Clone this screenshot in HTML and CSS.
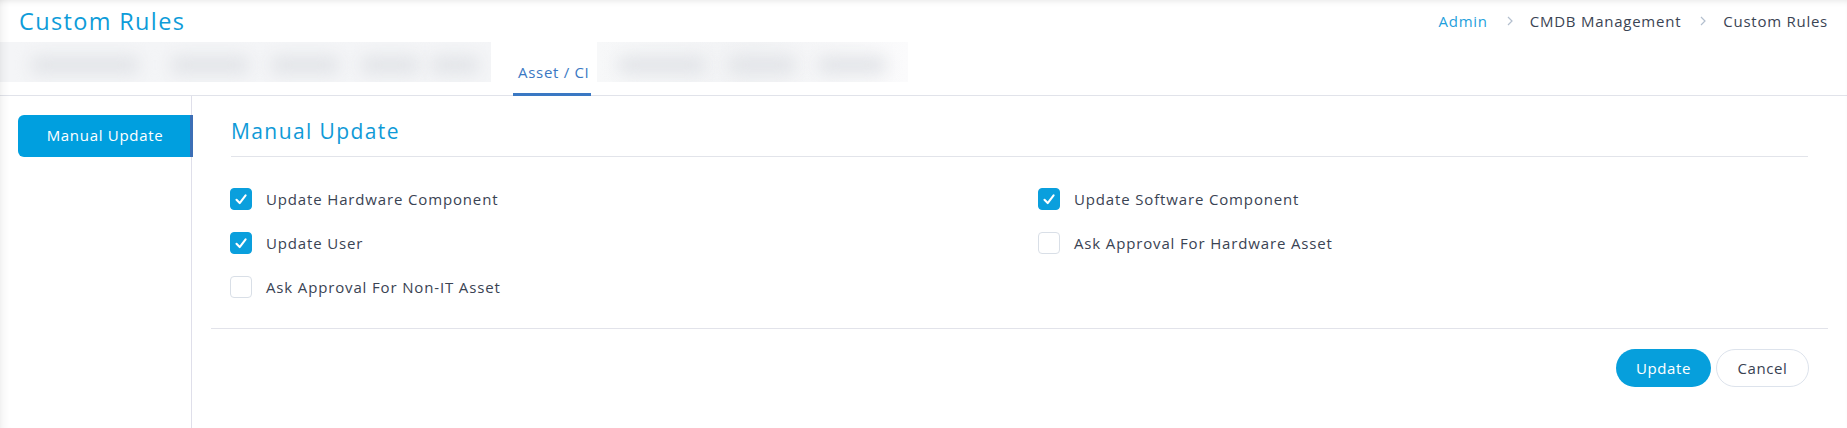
FILE: index.html
```html
<!DOCTYPE html>
<html lang="en">
<head>
<meta charset="utf-8">
<title>Custom Rules</title>
<link rel="stylesheet" href="styles.css">
</head>
<body>
<div class="page">
  <header class="topbar">
    <h1 class="page-title">Custom Rules</h1>
    <nav class="breadcrumb">
      <a class="crumb crumb-link">Admin</a>
      <svg class="crumb-sep" width="8" height="12" viewBox="0 0 8 12"><path d="M2 2l4 4-4 4" fill="none" stroke="#b3bfce" stroke-width="1.2"/></svg>
      <span class="crumb">CMDB Management</span>
      <svg class="crumb-sep" width="8" height="12" viewBox="0 0 8 12"><path d="M2 2l4 4-4 4" fill="none" stroke="#b3bfce" stroke-width="1.2"/></svg>
      <span class="crumb">Custom Rules</span>
    </nav>
  </header>

  <nav class="tabs">
    <div class="tab-blur tab-blur-left">
      <span class="blob b1"></span><span class="blob b2"></span><span class="blob b3"></span><span class="blob b4"></span><span class="blob b5"></span>
    </div>
    <a class="tab tab-active">Asset / CI</a>
    <div class="tab-blur tab-blur-right">
      <span class="blob b6"></span><span class="blob b7"></span><span class="blob b8"></span>
    </div>
  </nav>

  <div class="layout">
    <aside class="sidebar">
      <button class="side-item side-item-active">Manual Update</button>
    </aside>
    <main class="content">
      <section class="form-body">
        <h2 class="section-title">Manual Update</h2>
        <div class="options">
          <label class="option"><span class="check checked"><svg width="22" height="22" viewBox="0 0 22 22"><path d="M6.5 11.8l3.2 3.3L15.6 7.4" fill="none" stroke="#fff" stroke-width="2.1" stroke-linecap="round" stroke-linejoin="round"/></svg></span>Update Hardware Component</label>
          <label class="option"><span class="check checked"><svg width="22" height="22" viewBox="0 0 22 22"><path d="M6.5 11.8l3.2 3.3L15.6 7.4" fill="none" stroke="#fff" stroke-width="2.1" stroke-linecap="round" stroke-linejoin="round"/></svg></span>Update Software Component</label>
          <label class="option"><span class="check checked"><svg width="22" height="22" viewBox="0 0 22 22"><path d="M6.5 11.8l3.2 3.3L15.6 7.4" fill="none" stroke="#fff" stroke-width="2.1" stroke-linecap="round" stroke-linejoin="round"/></svg></span>Update User</label>
          <label class="option"><span class="check"></span>Ask Approval For Hardware Asset</label>
          <label class="option"><span class="check"></span>Ask Approval For Non-IT Asset</label>
        </div>
      </section>
      <footer class="form-footer">
        <button class="btn btn-primary">Update</button>
        <button class="btn btn-default">Cancel</button>
      </footer>
    </main>
  </div>
</div>
</body>
</html>
```

FILE: styles.css
```css
* { box-sizing: border-box; }
html, body { margin: 0; padding: 0; background: #fff; }
body {
  font-family: "Open Sans", "Noto Sans", sans-serif;
  color: #364152;
  width: 1847px;
  height: 428px;
  overflow: hidden;
}
.page {
  position: relative;
  height: 428px;
  background: #fff;
}
.page::after {
  content: "";
  position: absolute;
  inset: 0;
  pointer-events: none;
  box-shadow: inset 0 5px 6px -4px rgba(0,0,0,0.10), inset 10px 0 10px -8px rgba(0,0,0,0.07);
}

/* top bar */
.topbar {
  height: 42px;
  display: flex;
  align-items: center;
  justify-content: space-between;
  padding: 0 19px;
}
.page-title {
  margin: 0;
  font-size: 23.5px;
  font-weight: 500;
  color: #0e9cd9;
  letter-spacing: 1.35px;
}
.breadcrumb {
  display: flex;
  align-items: center;
  font-size: 15px;
  letter-spacing: 0.75px;
}
.crumb { color: #3b4454; }
.crumb-link { color: #1fa0dc; }
.crumb-sep { margin: 0 16px 0 18px; }

/* tabs */
.tabs {
  height: 54px;
  display: flex;
  align-items: flex-end;
  border-bottom: 1px solid #e1e3ea;
}
.tab-blur {
  position: relative;
  align-self: flex-start;
  height: 40px;
  overflow: hidden;
  background: #f4f5f7;
}
.tab-blur-left { width: 491px; }
.tab-blur-right { width: 311px; margin-left: 6px; background: linear-gradient(90deg, #f7f8f9, #f2f3f5 50%, #fbfbfc); }
.blob {
  position: absolute;
  height: 18px;
  top: 14px;
  border-radius: 9px;
  background: #e2e4e8;
  filter: blur(8px);
}
.b1 { left: 30px; width: 110px; }
.b2 { left: 170px; width: 80px; }
.b3 { left: 270px; width: 70px; }
.b4 { left: 360px; width: 60px; }
.b5 { left: 430px; width: 50px; }
.b6 { left: 20px; width: 90px; }
.b7 { left: 130px; width: 70px; }
.b8 { left: 220px; width: 70px; }
.tab {
  margin-left: 22px;
  padding: 0 0 11px 5px;
  width: 78px;
  font-size: 15px;
  letter-spacing: 0.7px;
  color: #3a78c3;
  border-bottom: 3px solid #3a78c3;
  margin-bottom: -1px;
  white-space: nowrap;
}

/* layout */
.layout {
  display: flex;
  height: 332px;
}
.sidebar {
  width: 192px;
  flex: none;
  border-right: 1px solid #dfdfea;
  padding-top: 19px;
  padding-left: 18px;
}
.side-item {
  display: block;
  width: 175px;
  height: 42px;
  margin-right: -1px;
  border: none;
  border-right: 3px solid #3c6fb6;
  border-radius: 6px 0 0 6px;
  background: #009fdf;
  color: #fff;
  font-family: inherit;
  font-size: 15px;
  letter-spacing: 0.7px;
  padding: 0 0 2px 2px;
}

.content {
  flex: 1;
  padding: 0 19px;
}
.form-body {
  padding: 20px 20px 0 20px;
}
.section-title {
  margin: 0;
  height: 41px;
  line-height: 30px;
  font-size: 21px;
  font-weight: 400;
  letter-spacing: 1.4px;
  color: #0f9ad7;
  border-bottom: 1px solid #e2e4ea;
}
.options {
  display: grid;
  grid-template-columns: 808px 1fr;
  padding-top: 20px;
  padding-bottom: 19px;
}
.option {
  display: flex;
  align-items: center;
  height: 44px;
  font-size: 15px;
  letter-spacing: 0.85px;
  color: #3a4353;
  margin-left: -1px;
}
.check {
  width: 22px;
  height: 22px;
  border-radius: 4px;
  border: 1px solid #d9dfe7;
  background: #fff;
  margin-right: 14px;
  display: flex;
  align-items: center;
  justify-content: center;
  flex: none;
  overflow: hidden;
}
.check svg { flex: none; }
.check.checked {
  background: #0a9fdd;
  border-color: #0a9fdd;
}

.form-footer {
  border-top: 1px solid #e2e3ea;
  display: flex;
  justify-content: flex-end;
  gap: 5px;
  padding-top: 20px;
  padding-right: 19px;
}
.btn {
  height: 38px;
  border-radius: 19px;
  font-family: inherit;
  font-size: 15px;
  letter-spacing: 0.6px;
  padding: 0;
}
.btn-primary {
  width: 95px;
  background: #069fdc;
  color: #fff;
  border: none;
}
.btn-default {
  width: 93px;
  background: #fff;
  color: #384152;
  border: 1px solid #dde3ec;
}
```
